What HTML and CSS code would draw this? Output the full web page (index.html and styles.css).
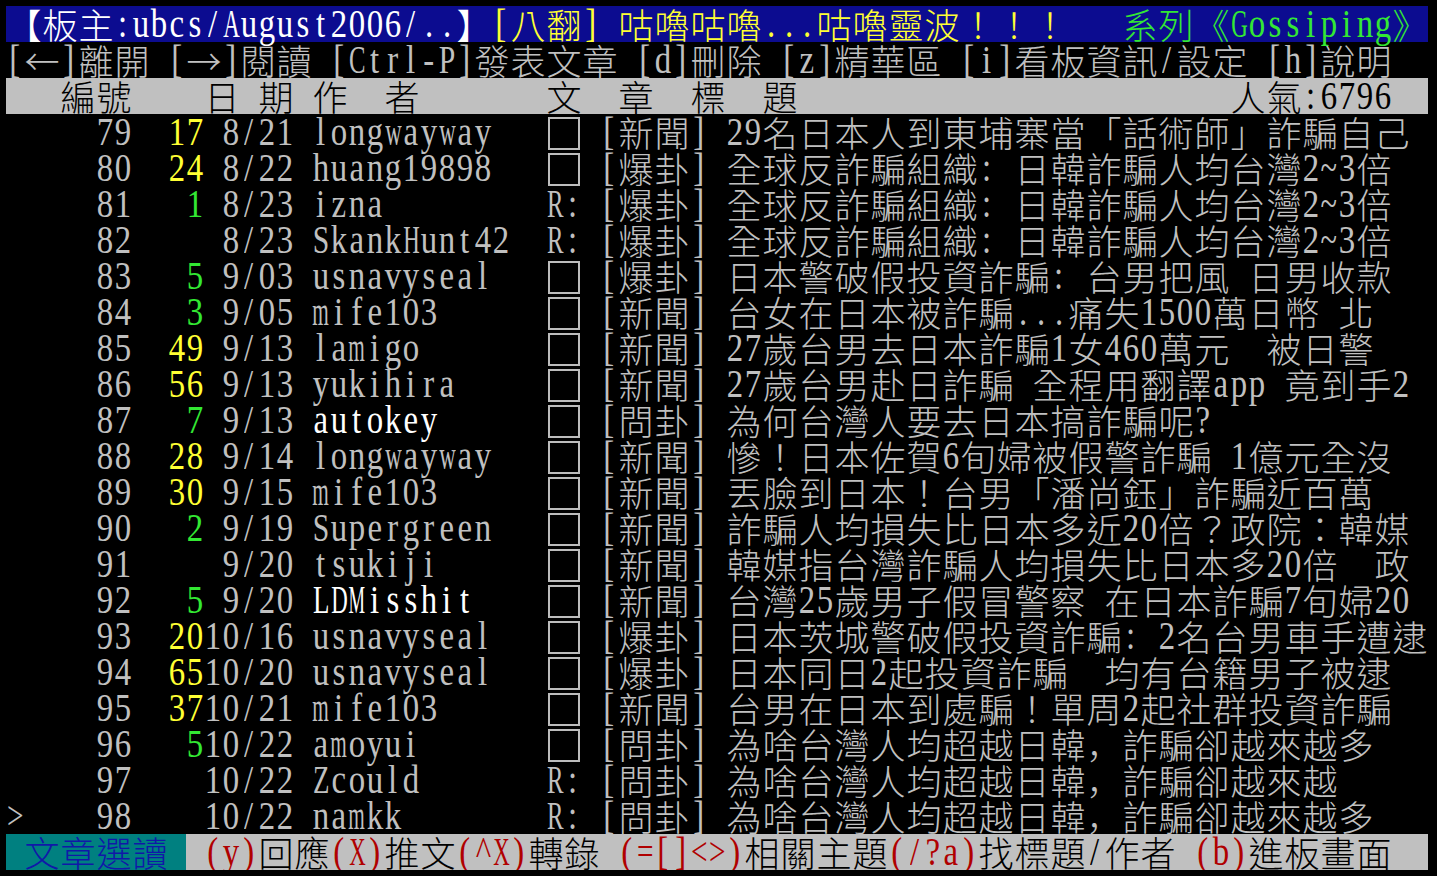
FILE: index.html
```html
<!DOCTYPE html>
<html lang="zh-Hant">
<head>
    <meta charset="UTF-8">
    <meta name="viewport" content="width=device-width, initial-scale=1.0">
    <title>Gossiping - 系列</title>
    <link rel="stylesheet" href="styles.css">
</head>
<body>
    <div class="screen" id="screen"></div>

    <script src="script.js"></script>
</body>
</html>
```

FILE: styles.css
```css
body {
    margin: 0;
    background: #000;
}
.screen {
    width: 1422px;
    padding: 6px 0 0 6px;
}
.row {
    display: flex;
    height: 36px;
    color: #c0c0c0;
}
.row.blue {
    background: #0c0c90;
}
.row.grey {
    background: #c0c0c0;
    color: #000;
}
.cell {
    flex: none;
    display: flex;
    justify-content: center;
    width: 18px;
    height: 36px;
    line-height: 36px;
    white-space: pre;
}
.cell.wide {
    width: 36px;
}
.lat {
    font-family: "Liberation Serif", serif;
    font-size: 40px;
}
.lat i {
    display: block;
    font-style: normal;
}
.cjk {
    font-family: "Noto Sans CJK TC", "Noto Sans CJK JP", sans-serif;
    font-size: 35px;
    font-weight: 300;
}
.cjk.low {
    font-family: "Noto Sans CJK JP", "Noto Sans CJK TC", sans-serif;
}
.box span {
    display: block;
    width: 32px;
    height: 33px;
    margin-top: 3px;
    border: 2px solid #bcbcbc;
    box-sizing: border-box;
}

/* colours */
.w { color: #fff; }
.y { color: #ffff33; }
.g { color: #33e833; }
.k { color: #000; }
.r { color: #b00000; }
.tl {
    background: #008080;
    color: #1018a8;
}
```

FILE: script.js
```js
const screen = document.getElementById('screen');
const ctx = document.createElement('canvas').getContext('2d');
ctx.font = '40px "Liberation Serif"';

// chars from arrows up are double width on the terminal
function isWide(ch) {
    return ch.codePointAt(0) >= 0x2190;
}

function makeCell(ch, cls) {
    const el = document.createElement('span');
    el.className = 'cell' + (cls ? ' ' + cls : '');

    if (ch === '□') {
        el.classList.add('wide', 'box');
        el.appendChild(document.createElement('span'));
    } else if (isWide(ch)) {
        el.classList.add('wide', 'cjk');
        if (ch === '，') el.classList.add('low');
        el.textContent = ch;
    } else if (ch !== ' ') {
        // squeeze serif glyphs into the half-width cell
        const w = ctx.measureText(ch).width;
        const scale = Math.min(0.82, 16.5 / w);
        const g = document.createElement('i');
        g.textContent = ch;
        g.style.transform = 'scaleX(' + scale.toFixed(3) + ')';
        el.classList.add('lat');
        el.appendChild(g);
    }
    return el;
}

function addRow(segments, rowClass) {
    const row = document.createElement('div');
    row.className = 'row' + (rowClass ? ' ' + rowClass : '');
    segments.forEach(([text, cls]) => {
        for (const ch of text) {
            row.appendChild(makeCell(ch, cls));
        }
    });
    screen.appendChild(row);
}

const posts = [
    [79, 17, ' 8/21', 'longwayway', '□', '[新聞]', '29名日本人到東埔寨當「話術師」詐騙自己'],
    [80, 24, ' 8/22', 'huang19898', '□', '[爆卦]', '全球反詐騙組織: 日韓詐騙人均台灣2~3倍'],
    [81, 1, ' 8/23', 'izna', 'R:', '[爆卦]', '全球反詐騙組織: 日韓詐騙人均台灣2~3倍'],
    [82, 0, ' 8/23', 'SkankHunt42', 'R:', '[爆卦]', '全球反詐騙組織: 日韓詐騙人均台灣2~3倍'],
    [83, 5, ' 9/03', 'usnavyseal', '□', '[爆卦]', '日本警破假投資詐騙: 台男把風 日男收款'],
    [84, 3, ' 9/05', 'mife103', '□', '[新聞]', '台女在日本被詐騙...痛失1500萬日幣 北'],
    [85, 49, ' 9/13', 'lamigo', '□', '[新聞]', '27歲台男去日本詐騙1女460萬元  被日警'],
    [86, 56, ' 9/13', 'yukihira', '□', '[新聞]', '27歲台男赴日詐騙 全程用翻譯app 竟到手2'],
    [87, 7, ' 9/13', 'autokey', '□', '[問卦]', '為何台灣人要去日本搞詐騙呢?', true],
    [88, 28, ' 9/14', 'longwayway', '□', '[新聞]', '慘！日本佐賀6旬婦被假警詐騙 1億元全沒'],
    [89, 30, ' 9/15', 'mife103', '□', '[新聞]', '丟臉到日本！台男「潘尚鈺」詐騙近百萬'],
    [90, 2, ' 9/19', 'Supergreen', '□', '[新聞]', '詐騙人均損失比日本多近20倍？政院：韓媒'],
    [91, 0, ' 9/20', 'tsukiji', '□', '[新聞]', '韓媒指台灣詐騙人均損失比日本多20倍  政'],
    [92, 5, ' 9/20', 'LDMisshit', '□', '[新聞]', '台灣25歲男子假冒警察 在日本詐騙7旬婦20', true],
    [93, 20, '10/16', 'usnavyseal', '□', '[爆卦]', '日本茨城警破假投資詐騙: 2名台男車手遭逮'],
    [94, 65, '10/20', 'usnavyseal', '□', '[爆卦]', '日本同日2起投資詐騙  均有台籍男子被逮'],
    [95, 37, '10/21', 'mife103', '□', '[新聞]', '台男在日本到處騙！單周2起社群投資詐騙'],
    [96, 5, '10/22', 'amoyui', '□', '[問卦]', '為啥台灣人均超越日韓，詐騙卻越來越多'],
    [97, 0, '10/22', 'Zcould', 'R:', '[問卦]', '為啥台灣人均超越日韓，詐騙卻越來越'],
    [98, 0, '10/22', 'namkk', 'R:', '[問卦]', '為啥台灣人均超越日韓，詐騙卻越來越多']
];
const current = 98;

addRow([
    ['【板主:ubcs/August2006/..】', 'w'],
    ['[八翻] 咕嚕咕嚕...咕嚕靈波！！！', 'y'],
    ['   ', ''],
    ['系列《Gossiping》', 'g']
], 'blue');

addRow([['[←]離開 [→]閱讀 [Ctrl-P]發表文章 [d]刪除 [z]精華區 [i]看板資訊/設定 [h]說明', '']]);

addRow([
    ['   編號    日 期 作  者       文  章  標  題', ''],
    [' '.repeat(24), ''],
    ['人氣:6796', '']
], 'grey');

posts.forEach(([num, push, date, author, mark, cat, title, bright]) => {
    const pushText = push ? String(push).padStart(2) : '  ';
    addRow([
        [num === current ? '>' : ' ', ''],
        [String(num).padStart(6) + '  ', ''],
        [pushText, push >= 10 ? 'y' : 'g'],
        [date + ' ', ''],
        [author.padEnd(12), bright ? 'w' : ''],
        [' ' + mark + ' ', ''],
        [cat + ' ' + title, '']
    ]);
});

addRow([
    [' 文章選讀 ', 'tl'],
    [' ', ''],
    ['(y)', 'r'], ['回應', ''],
    ['(X)', 'r'], ['推文', ''],
    ['(^X)', 'r'], ['轉錄 ', ''],
    ['(=[]<>)', 'r'], ['相關主題', ''],
    ['(/?a)', 'r'], ['找標題/作者 ', ''],
    ['(b)', 'r'], ['進板畫面', '']
], 'grey');
```
